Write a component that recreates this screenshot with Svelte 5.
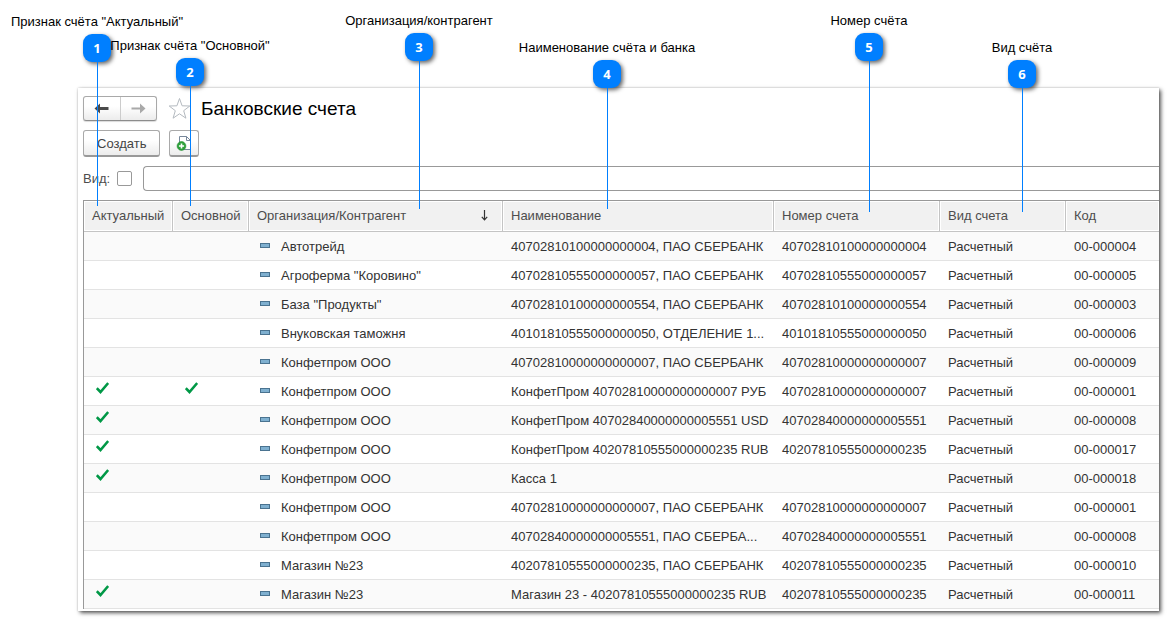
<script lang="ts">
  interface Account {
    org: string;
    name: string;
    number: string;
    code: string;
    active?: boolean;
    main?: boolean;
  }

  interface Callout {
    label: string;
    x: number;
    top: number;
    line: number;
  }

  const callouts: Callout[] = [
    { label: 'Признак счёта "Актуальный"', x: 83, top: 12, line: 144 },
    { label: 'Признак счёта "Основной"', x: 176, top: 36, line: 120 },
    { label: "Организация/контрагент", x: 405, top: 11, line: 148 },
    { label: "Наименование счёта и банка", x: 593, top: 38, line: 121 },
    { label: "Номер счёта", x: 855, top: 11, line: 151 },
    { label: "Вид счёта", x: 1008, top: 38, line: 124 },
  ];

  const accounts: Account[] = [
    { org: "Автотрейд", name: "40702810100000000004, ПАО СБЕРБАНК", number: "40702810100000000004", code: "00-000004" },
    { org: 'Агроферма "Коровино"', name: "40702810555000000057, ПАО СБЕРБАНК", number: "40702810555000000057", code: "00-000005" },
    { org: 'База "Продукты"', name: "40702810100000000554, ПАО СБЕРБАНК", number: "40702810100000000554", code: "00-000003" },
    { org: "Внуковская таможня", name: "40101810555000000050, ОТДЕЛЕНИЕ 1...", number: "40101810555000000050", code: "00-000006" },
    { org: "Конфетпром ООО", name: "40702810000000000007, ПАО СБЕРБАНК", number: "40702810000000000007", code: "00-000009" },
    { org: "Конфетпром ООО", name: "КонфетПром 40702810000000000007 РУБ", number: "40702810000000000007", code: "00-000001", active: true, main: true },
    { org: "Конфетпром ООО", name: "КонфетПром 40702840000000005551 USD", number: "40702840000000005551", code: "00-000008", active: true },
    { org: "Конфетпром ООО", name: "КонфетПром 40207810555000000235 RUB", number: "40207810555000000235", code: "00-000017", active: true },
    { org: "Конфетпром ООО", name: "Касса 1", number: "", code: "00-000018", active: true },
    { org: "Конфетпром ООО", name: "40702810000000000007, ПАО СБЕРБАНК", number: "40702810000000000007", code: "00-000001" },
    { org: "Конфетпром ООО", name: "40702840000000005551, ПАО СБЕРБА...", number: "40702840000000005551", code: "00-000008" },
    { org: "Магазин №23", name: "40207810555000000235, ПАО СБЕРБАНК", number: "40207810555000000235", code: "00-000010" },
    { org: "Магазин №23", name: "Магазин 23 - 40207810555000000235 RUB", number: "40207810555000000235", code: "00-000011", active: true },
  ];

  let filterOn = $state(false);
  let kind = $state("");
</script>

{#snippet check()}
  <svg class="check" width="13" height="12" viewBox="0 0 13 12" role="img" aria-label="Да">
    <path d="M0.8 6.2 L4.5 10 L12.2 1" fill="none" stroke="#009846" stroke-width="2.6" />
  </svg>
{/snippet}

<div class="page">
  <main class="window">
    <div class="bar">
      <div class="nav">
        <button aria-label="Назад">
          <svg width="15" height="11" viewBox="0 0 15 11">
            <path d="M0.5 5.5 L6 0.5 V4 H14.5 V7 H6 V10.5 Z" fill="#4a4a4a" />
          </svg>
        </button>
        <button aria-label="Вперед">
          <svg width="15" height="11" viewBox="0 0 15 11">
            <path d="M14.5 5.5 L9 0.5 V4.5 H0.5 V6.5 H9 V10.5 Z" fill="#a9a9a9" />
          </svg>
        </button>
      </div>
      <button class="star" aria-label="Добавить в избранное">
        <svg width="23" height="23" viewBox="0 0 23 23">
          <path
            d="M11.5 1.5 L14.1 8.8 L21.8 9 L15.7 13.7 L17.9 21.2 L11.5 16.8 L5.1 21.2 L7.3 13.7 L1.2 9 L8.9 8.8 Z"
            fill="#fff"
            stroke="#b4bac0"
          />
        </svg>
      </button>
      <h1>Банковские счета</h1>
    </div>

    <div class="bar commands">
      <button class="btn">Создать</button>
      <button class="btn icon" aria-label="Создать копированием">
        <svg width="16" height="16" viewBox="0 0 16 16">
          <path d="M3.5 1.5 H10.5 L14.5 5.5 V14.5 H3.5 Z" fill="#fff" stroke="#77879a" />
          <path d="M10.5 1.5 V5.5 H14.5" fill="none" stroke="#77879a" />
          <circle cx="5.5" cy="11" r="4.4" fill="#2da13a" stroke="#1c8a2c" stroke-width="0.6" />
          <path d="M5.5 8.4 V13.6 M2.9 11 H8.1" stroke="#fff" stroke-width="1.6" />
        </svg>
      </button>
    </div>

    <div class="bar filter">
      <label for="kind-on">Вид:</label>
      <input id="kind-on" type="checkbox" bind:checked={filterOn} />
      <input class="kind" type="text" aria-label="Вид" bind:value={kind} />
    </div>

    <table>
      <colgroup>
        <col class="c-active" />
        <col class="c-main" />
        <col class="c-org" />
        <col class="c-name" />
        <col class="c-number" />
        <col class="c-kind" />
        <col />
      </colgroup>
      <thead>
        <tr>
          <th>Актуальный</th>
          <th>Основной</th>
          <th aria-sort="ascending">
            <span class="sorted">
              Организация/Контрагент
              <svg width="7" height="11" viewBox="0 0 7 11" aria-hidden="true">
                <path d="M3.5 0 V9.5 M0.8 6.8 L3.5 9.8 L6.2 6.8" fill="none" stroke="#333" stroke-width="1.2" />
              </svg>
            </span>
          </th>
          <th>Наименование</th>
          <th>Номер счета</th>
          <th>Вид счета</th>
          <th>Код</th>
        </tr>
      </thead>
      <tbody>
        {#each accounts as account}
          <tr>
            <td class="flag">{#if account.active}{@render check()}{/if}</td>
            <td class="flag">{#if account.main}{@render check()}{/if}</td>
            <td><span class="org"><i class="dash"></i>{account.org}</span></td>
            <td>{account.name}</td>
            <td>{account.number}</td>
            <td>Расчетный</td>
            <td>{account.code}</td>
          </tr>
        {/each}
      </tbody>
    </table>
  </main>

  <!-- Numbered pointers lying over the window -->
  {#each callouts as callout, i}
    <div class="callout" style="left: {callout.x}px; top: {callout.top}px">
      <span class="label">{callout.label}</span>
      <span class="badge">{i + 1}</span>
      <span class="line" style="height: {callout.line}px"></span>
    </div>
  {/each}
</div>

<style>
  :global(body) {
    margin: 0;
    background: #fff;
  }

  .page {
    position: relative;
    padding: 88px 9px 9px 78px;
    font-family: "Liberation Sans", Arial, sans-serif;
    font-size: 13px;
    color: #333;
  }

  .window {
    padding: 8px 0 2px 5px;
    background: #fff;
    overflow: hidden;
    box-shadow:
      0 0 2px rgba(0, 0, 0, 0.2),
      2px 2px 4px rgba(0, 0, 0, 0.65);
  }

  .bar {
    display: flex;
    align-items: center;
    margin-bottom: 9px;
  }

  button {
    font: inherit;
    color: #444;
    cursor: pointer;
  }

  .nav {
    display: flex;
    box-sizing: border-box;
    width: 74px;
    height: 25px;
    border: 1px solid #a9a9a9;
    border-bottom-color: #8c8c8c;
    border-radius: 3px;
    background: linear-gradient(#fff 40%, #ececec);
    box-shadow: 0 1px 1px rgba(0, 0, 0, 0.15);
  }

  .nav button {
    flex: 1;
    display: grid;
    place-items: center;
    padding: 0;
    border: none;
    background: none;
  }

  .nav button + button {
    border-left: 1px solid #ccc;
  }

  .star {
    display: flex;
    margin: 0 10px 0 11px;
    padding: 0;
    border: none;
    background: none;
  }

  h1 {
    margin: 0;
    font-size: 19px;
    font-weight: 400;
    line-height: 25px;
    color: #000;
  }

  .commands {
    gap: 9px;
  }

  .btn {
    display: grid;
    place-items: center;
    height: 27px;
    padding: 0 13px;
    border: 1px solid #a9a9a9;
    border-bottom: 2px solid #999;
    border-radius: 3px;
    background: linear-gradient(#fff 40%, #ececec);
  }

  .btn.icon {
    padding: 0 6px;
  }

  .filter label {
    color: #4d4d4d;
  }

  .filter input {
    appearance: none;
    box-sizing: border-box;
    border: 1px solid #999;
    background: #fff;
  }

  .filter input[type="checkbox"] {
    width: 15px;
    height: 15px;
    margin: 0 11px 0 7px;
    border-radius: 2px;
  }

  .filter input[type="checkbox"]:checked {
    background: #009846;
  }

  .filter .kind {
    flex: 1;
    height: 25px;
    padding: 0 6px;
    border-right: none;
    border-radius: 4px 0 0 4px;
    font: inherit;
  }

  table {
    width: 100%;
    table-layout: fixed;
    border-collapse: separate;
    border-spacing: 0;
    border-top: 1px solid #999;
    border-left: 1px solid #999;
  }

  .c-active {
    width: 89px;
  }

  .c-main {
    width: 76px;
  }

  .c-org {
    width: 254px;
  }

  .c-name {
    width: 271px;
  }

  .c-number {
    width: 166px;
  }

  .c-kind {
    width: 126px;
  }

  th,
  td {
    box-sizing: border-box;
    padding: 0 8px;
    text-align: left;
    font-weight: 400;
    white-space: nowrap;
    overflow: hidden;
  }

  th {
    height: 31px;
    padding-bottom: 2px;
    border-right: 1px solid #c4c4c4;
    border-bottom: 1px solid #c4c4c4;
    background: #f1f1f1;
    box-shadow: inset 0 0 0 1px #fff;
    color: #4d4d4d;
  }

  th:last-child {
    border-right: none;
  }

  td {
    height: 29px;
    border-bottom: 1px solid #e3e3e3;
  }

  tbody tr:nth-child(odd) {
    background: #fafafa;
  }

  .sorted {
    display: flex;
    align-items: center;
    justify-content: space-between;
    padding-right: 6px;
  }

  .flag {
    padding-left: 12px;
  }

  .check {
    display: block;
    margin-bottom: 6px;
  }

  .org {
    display: flex;
    align-items: center;
    gap: 11px;
    padding-left: 3px;
  }

  .dash {
    box-sizing: border-box;
    width: 10px;
    height: 5px;
    border: 1px solid #4a7390;
    background: #7fb0d0;
    margin-bottom: 2px;
  }

  .callout {
    position: absolute;
    display: flex;
    flex-direction: column;
    align-items: center;
    width: 28px;
    pointer-events: none;
    color: #000;
  }

  .label {
    line-height: 20px;
    margin-bottom: 2px;
    white-space: nowrap;
  }

  .badge {
    width: 28px;
    height: 28px;
    border-radius: 9px;
    background: #007fff;
    box-shadow: 2px 2px 4px rgba(0, 0, 0, 0.6);
    color: #fff;
    font-family: "Open Sans", sans-serif;
    font-weight: 700;
    line-height: 28px;
    text-align: center;
  }

  .line {
    width: 1px;
    margin-left: 1px;
    background: #007fff;
  }
</style>
